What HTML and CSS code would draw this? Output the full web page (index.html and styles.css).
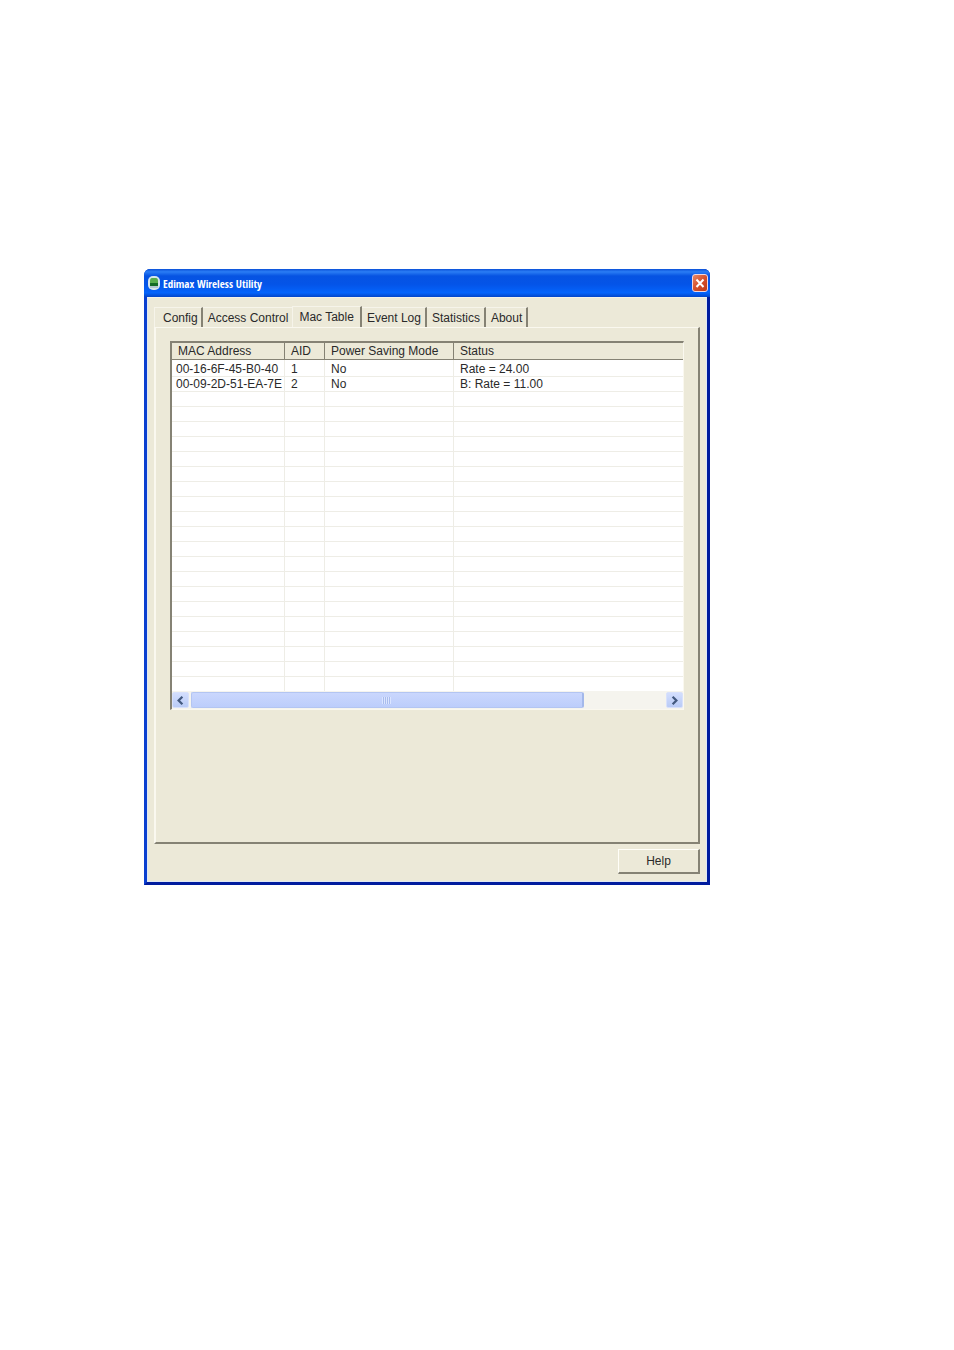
FILE: index.html
```html
<!DOCTYPE html>
<html lang="en">
<head>
    <meta charset="UTF-8">
    <title>Edimax Wireless Utility</title>
    <link rel="stylesheet" href="styles.css">
</head>
<body>
<div class="window">
    <div class="titlebar">
        <svg class="logo" viewBox="0 0 14 16">
            <rect x="1" y="1" width="12" height="14" rx="5" fill="#d5e6ec"/>
            <path d="M3 6Q3 3 5 3h4q2 0 2 3v2H3z" fill="#57ad4c"/>
            <path d="M3 8h8v3H3z" fill="#126b25"/>
            <path d="M3 12h8" stroke="#8fa9b5"/>
        </svg>
        <h1>Edimax Wireless Utility</h1>
        <button class="close" aria-label="Close">
            <svg viewBox="0 0 14 16"><path d="M3.5 4.5l7 7.5M10.5 4.5l-7 7.5" stroke="#fff" stroke-width="2"/></svg>
        </button>
    </div>
    <div class="client">
        <div class="tabs" role="tablist">
            <button class="tab" role="tab">Config</button>
            <button class="tab before" role="tab">Access Control</button>
            <button class="tab active" role="tab" aria-selected="true">Mac Table</button>
            <button class="tab" role="tab">Event Log</button>
            <button class="tab" role="tab">Statistics</button>
            <button class="tab" role="tab">About</button>
        </div>
        <div class="panel">
            <div class="list">
                <table>
                    <colgroup>
                        <col class="mac">
                        <col class="aid">
                        <col class="mode">
                        <col>
                    </colgroup>
                    <thead>
                        <tr><th>MAC Address</th><th>AID</th><th>Power Saving Mode</th><th>Status</th></tr>
                    </thead>
                    <tbody>
                        <tr><td>00-16-6F-45-B0-40</td><td>1</td><td>No</td><td>Rate = 24.00</td></tr>
                        <tr><td>00-09-2D-51-EA-7E</td><td>2</td><td>No</td><td>B: Rate = 11.00</td></tr>
                        <tr class="blank"><td></td><td></td><td></td><td></td></tr>
                    </tbody>
                </table>
                <div class="scrollbar">
                    <button class="arrow" aria-label="Scroll left">
                        <svg viewBox="0 0 16 16"><path d="M10 4L6 8l4 4" fill="none" stroke="#43597f" stroke-width="2.4"/></svg>
                    </button>
                    <div class="track">
                        <div class="thumb"><span class="grip"></span></div>
                    </div>
                    <button class="arrow" aria-label="Scroll right">
                        <svg viewBox="0 0 16 16"><path d="M6 4l4 4-4 4" fill="none" stroke="#43597f" stroke-width="2.4"/></svg>
                    </button>
                </div>
            </div>
        </div>
        <div class="footer">
            <button class="help">Help</button>
        </div>
    </div>
</div>
</body>
</html>
```
FILE: styles.css
```css
* {
    margin: 0;
    padding: 0;
    box-sizing: border-box;
}

body {
    background: #fff;
    padding: 269px 144px;
    font-family: "Liberation Sans", Arial, sans-serif;
    font-size: 12px;
    color: #2a2a2a;
}

button {
    font: inherit;
    color: inherit;
    border: 0;
    background: none;
}

svg {
    display: block;
}

.window {
    max-width: 566px;
    border: 3px solid #0a3fd0;
    border-top: 0;
    border-right-color: #001c9e;
    border-bottom-color: #001c9e;
    border-radius: 6px 6px 0 0;
    background: #0a3fd0;
}

/* title bar */
.titlebar {
    display: flex;
    align-items: center;
    gap: 2px;
    height: 28px;
    margin: 0 -3px;
    padding: 0 2px 0 3px;
    border-radius: 6px 6px 0 0;
    background: linear-gradient(#0a50d8, #2a7df5 10%, #0653e2 25%, #0454e8 55%, #0464fc 85%, #0345c8);
}

.logo {
    width: 14px;
    height: 16px;
}

.titlebar h1 {
    flex: 1;
    font-family: "Open Sans Condensed", "Roboto Condensed", Lato, sans-serif;
    font-size: 11px;
    font-weight: bold;
    color: #fff;
}

.close {
    width: 16px;
    height: 18px;
    border: 1px solid #f0d5dc;
    border-radius: 3px;
    background: linear-gradient(135deg, #e88a68, #d4502c 50%, #bd3a18);
}

/* client area */
.client {
    padding: 8px 6px 7px 6px;
    border: 1px solid #dfe8f5;
    border-top-color: #f4f2e8;
    background: #ece9d8;
}

.tabs {
    display: flex;
    align-items: flex-end;
    height: 21px;
}

.tab {
    height: 20px;
    padding: 0 4px 0 5px;
    border-top: 1px solid #f6f4ea;
    border-right: 2px solid #858274;
    line-height: 18px;
    white-space: nowrap;
}

.tab:first-child {
    padding: 0 3px 0 8px;
    border-left: 1px solid #f6f4ea;
}

.tab.before {
    border-right: 0;
}

.tab.active {
    height: 21px;
    padding: 0 6px;
    border-left: 1px solid #f6f4ea;
    line-height: 16px;
}

.panel {
    padding: 13px 14px 132px 14px;
    border: 2px solid #858274;
    border-top: 1px solid #faf8ef;
    border-left: 2px solid #faf8ef;
}

/* list view */
.list {
    border: 1px solid #faf8ef;
    border-top: 2px solid #858274;
    border-left: 2px solid #858274;
    background: #fff;
}

table {
    width: 100%;
    border-collapse: separate;
    border-spacing: 0;
    table-layout: fixed;
}

.mac {
    width: 113px;
}

.aid {
    width: 40px;
}

.mode {
    width: 129px;
}

th {
    height: 17px;
    padding-left: 6px;
    border-right: 1px solid #858274;
    border-bottom: 1px solid #858274;
    background: #ece9d8;
    font-weight: normal;
    line-height: 16px;
    text-align: left;
    white-space: nowrap;
}

td {
    height: 15px;
    padding-left: 6px;
    border-right: 1px solid #eeede6;
    border-bottom: 1px solid #eeede6;
    line-height: 14px;
    white-space: nowrap;
}

td:first-child {
    padding-left: 4px;
}

th:last-child,
td:last-child {
    border-right: 0;
}

tbody tr:first-child td {
    padding-top: 2px;
}

/* ruled rows without data */
.blank td {
    height: 299px;
    border-bottom: 0;
    background: repeating-linear-gradient(transparent 0 14px, #eeede6 14px 15px);
}

.scrollbar {
    display: flex;
    gap: 2px;
    height: 18px;
    padding: 1px 0;
    background: #f5f4ee;
}

.arrow {
    width: 17px;
    border: 1px solid #d8e1fb;
    border-radius: 2px;
    background: linear-gradient(#d3defd, #b9cbf6);
}

.track {
    flex: 1;
}

.thumb {
    display: flex;
    align-items: center;
    justify-content: center;
    width: 83%;
    height: 16px;
    border: 1px solid #b3c5f2;
    border-right: 2px solid #a3b8ea;
    border-radius: 2px;
    background: linear-gradient(#cad7fd, #bccdfb);
}

.grip {
    width: 9px;
    height: 7px;
    background: repeating-linear-gradient(90deg, #dbe5ff 0 1px, #a9bced 1px 2px);
}

/* bottom button */
.footer {
    display: flex;
    justify-content: flex-end;
    padding-top: 5px;
}

.help {
    width: 82px;
    height: 25px;
    border: 1px solid #fffef8;
    border-right: 2px solid #858274;
    border-bottom: 2px solid #858274;
}
```
